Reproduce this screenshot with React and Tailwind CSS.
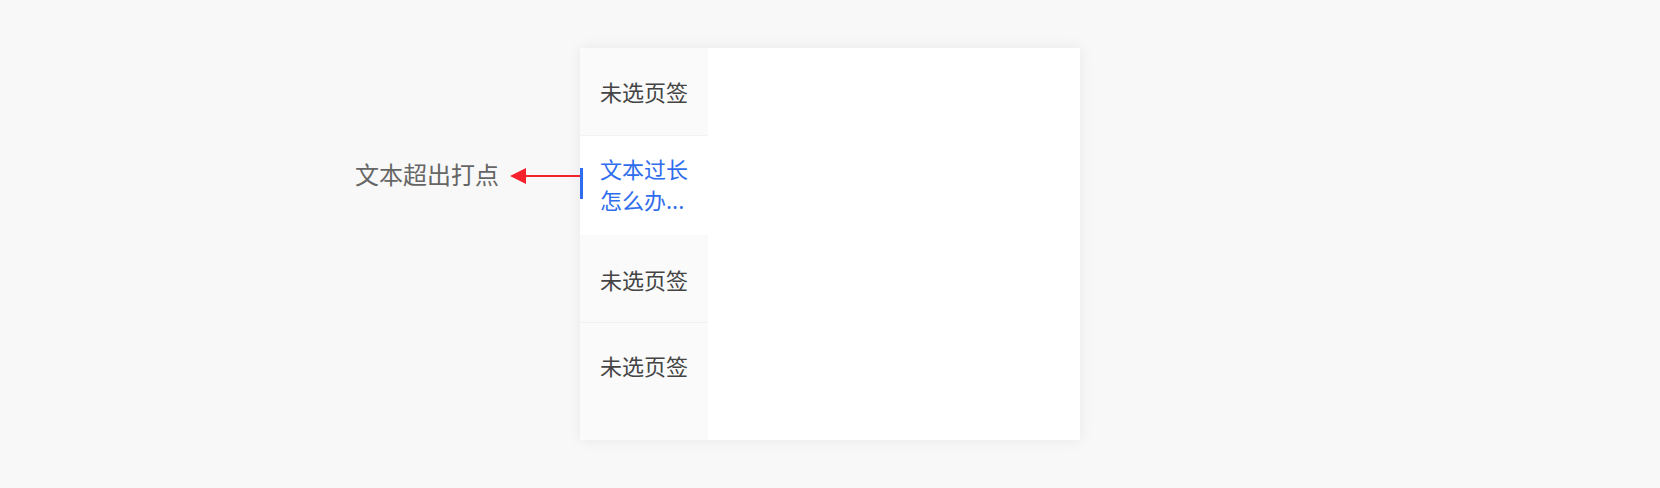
export default function App() {
  const font = { fontFamily: '"Noto Sans CJK SC", "Noto Sans", sans-serif' };
  return (
    <div className="w-full h-[488px] bg-[#f8f8f8] pt-[48px]" style={font}>
      <div className="mx-auto w-[500px] h-[392px] bg-white flex shadow-[0_0_14px_rgba(0,0,0,0.07)]">
        <div className="w-[128px] bg-[#fafafa] flex flex-col">
          <div className="h-[88px] flex items-center px-[20px] pb-[1px] text-[22px] leading-[30px] text-[#444444] border-b border-[#f3f3f3]">
            未选页签
          </div>
          <div className="relative h-[99px] bg-white px-[20px] pt-[17px] text-[22px] leading-[31px] text-[#2f6dec]">
            <div className="w-[88px]">文本过长怎么办...</div>
            <div className="absolute left-0 top-[32px] w-[3px] h-[31px] bg-[#2f6dec]" />
            <div className="absolute right-full top-[23px] flex items-center gap-[11px] whitespace-nowrap">
              <span className="text-[24px] leading-[30px] text-[#666666] mb-[4px]">文本超出打点</span>
              <svg width="70" height="16" viewBox="0 0 70 16" className="block">
                <polygon points="0,8 16,0 16,16" fill="#f5222d" />
                <line x1="15" y1="8" x2="70" y2="8" stroke="#f5222d" strokeWidth="2" />
              </svg>
            </div>
          </div>
          <div className="h-[88px] flex items-center px-[20px] text-[22px] leading-[30px] text-[#444444] border-b border-[#f0f0f0]">
            未选页签
          </div>
          <div className="flex-1 px-[20px] pt-[27px] text-[22px] leading-[30px] text-[#444444]">
            未选页签
          </div>
        </div>
        <div className="flex-1 bg-white" />
      </div>
    </div>
  );
}
